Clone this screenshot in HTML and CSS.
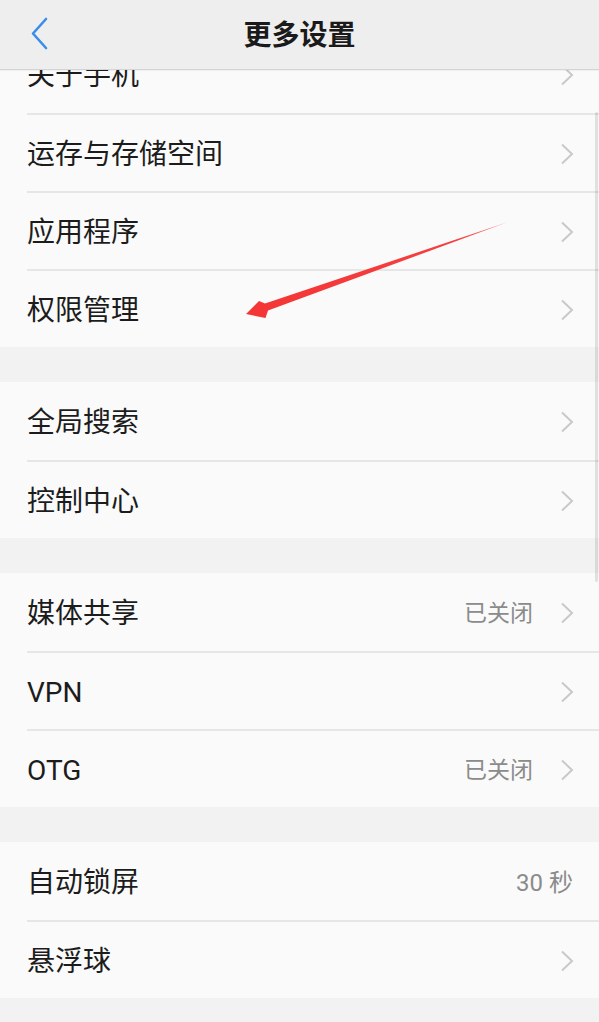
FILE: index.html
```html
<!DOCTYPE html>
<html lang="zh-CN">
<head>
<meta charset="utf-8">
<title>更多设置</title>
<link rel="stylesheet" href="styles.css">
</head>
<body>
<div class="screen">
  <header class="topbar">
    <span class="back">
      <svg width="20" height="34" viewBox="0 0 20 34"><path d="M16 2 L3 16.5 L16 31" fill="none" stroke="#3a8ee8" stroke-width="2.6" stroke-linecap="round" stroke-linejoin="round"/></svg>
    </span>
    <h1 class="title">更多设置</h1>
    <span class="spacer"></span>
  </header>

  <main class="list">
    <section class="group">
      <div class="row"><span class="label">关于手机</span><span class="chev"><svg width="14" height="22" viewBox="0 0 14 22"><path d="M2 1.5 L12 11 L2 20.5" fill="none" stroke="#c9c9c9" stroke-width="2"/></svg></span></div>
      <div class="row"><span class="label">运存与存储空间</span><span class="chev"><svg width="14" height="22" viewBox="0 0 14 22"><path d="M2 1.5 L12 11 L2 20.5" fill="none" stroke="#c9c9c9" stroke-width="2"/></svg></span></div>
      <div class="row"><span class="label">应用程序</span><span class="chev"><svg width="14" height="22" viewBox="0 0 14 22"><path d="M2 1.5 L12 11 L2 20.5" fill="none" stroke="#c9c9c9" stroke-width="2"/></svg></span></div>
      <div class="row"><span class="label">权限管理</span><span class="chev"><svg width="14" height="22" viewBox="0 0 14 22"><path d="M2 1.5 L12 11 L2 20.5" fill="none" stroke="#c9c9c9" stroke-width="2"/></svg></span></div>
    </section>

    <section class="group">
      <div class="row"><span class="label">全局搜索</span><span class="chev"><svg width="14" height="22" viewBox="0 0 14 22"><path d="M2 1.5 L12 11 L2 20.5" fill="none" stroke="#c9c9c9" stroke-width="2"/></svg></span></div>
      <div class="row"><span class="label">控制中心</span><span class="chev"><svg width="14" height="22" viewBox="0 0 14 22"><path d="M2 1.5 L12 11 L2 20.5" fill="none" stroke="#c9c9c9" stroke-width="2"/></svg></span></div>
    </section>

    <section class="group">
      <div class="row"><span class="label">媒体共享</span><span class="value">已关闭</span><span class="chev"><svg width="14" height="22" viewBox="0 0 14 22"><path d="M2 1.5 L12 11 L2 20.5" fill="none" stroke="#c9c9c9" stroke-width="2"/></svg></span></div>
      <div class="row"><span class="label">VPN</span><span class="chev"><svg width="14" height="22" viewBox="0 0 14 22"><path d="M2 1.5 L12 11 L2 20.5" fill="none" stroke="#c9c9c9" stroke-width="2"/></svg></span></div>
      <div class="row"><span class="label">OTG</span><span class="value">已关闭</span><span class="chev"><svg width="14" height="22" viewBox="0 0 14 22"><path d="M2 1.5 L12 11 L2 20.5" fill="none" stroke="#c9c9c9" stroke-width="2"/></svg></span></div>
    </section>

    <section class="group">
      <div class="row"><span class="label">自动锁屏</span><span class="value value-end">30 秒</span></div>
      <div class="row"><span class="label">悬浮球</span><span class="chev"><svg width="14" height="22" viewBox="0 0 14 22"><path d="M2 1.5 L12 11 L2 20.5" fill="none" stroke="#c9c9c9" stroke-width="2"/></svg></span></div>
    </section>
  </main>

  <div class="scrollbar"></div>

  <svg class="annotation" width="599" height="1022" viewBox="0 0 599 1022">
    <defs>
      <linearGradient id="fade" x1="246" y1="314" x2="508" y2="222" gradientUnits="userSpaceOnUse">
        <stop offset="0" stop-color="#f43535"/>
        <stop offset="0.8" stop-color="#f54040"/>
        <stop offset="1" stop-color="#f78a8a"/>
      </linearGradient>
    </defs>
    <polygon points="246,314 259,301 265,303.6 508,222 268,310.6 265.5,318" fill="url(#fade)"/>
  </svg>
</div>
</body>
</html>
```

FILE: styles.css
```css
* {
  box-sizing: border-box;
}

html, body {
  margin: 0;
  padding: 0;
}

body {
  background: #f2f2f2;
  font-family: "Roboto", "Noto Sans CJK SC", sans-serif;
  color: #1c1c1c;
}

.screen {
  position: relative;
  width: 599px;
  height: 1022px;
  overflow: hidden;
  background: #f2f2f2;
}

.topbar {
  position: absolute;
  top: 0;
  left: 0;
  right: 0;
  height: 70px;
  z-index: 2;
  background: #eeeeee;
  border-bottom: 1px solid #d4d4d4;
  box-shadow: 0 1px 1px rgba(0, 0, 0, 0.04);
  display: grid;
  grid-template-columns: 1fr auto 1fr;
  align-items: center;
}

.back {
  display: flex;
  align-items: center;
  padding-left: 30px;
  padding-bottom: 2px;
}

.title {
  margin: 0;
  font-family: "Noto Sans CJK SC", sans-serif;
  font-size: 28px;
  font-weight: 700;
  color: #1a1a1a;
  letter-spacing: 0;
  padding-bottom: 4px;
}

.list {
  padding-top: 35px;
  display: flex;
  flex-direction: column;
  gap: 35px;
}

.group {
  background: #fafafa;
  padding-left: 27px;
}

.row {
  height: 78px;
  display: flex;
  align-items: center;
  padding-right: 25px;
}

.row + .row {
  border-top: 2px solid #e6e6e6;
}

.label {
  flex: 1;
  font-size: 28px;
  line-height: 1;
  padding-top: 3px;
  color: #1c1c1c;
}

.value {
  font-size: 23px;
  line-height: 1;
  padding-top: 3px;
  color: #8b8b8b;
  margin-right: 27px;
}

.value-end {
  font-size: 24px;
  margin-right: 1px;
}

.chev {
  display: flex;
  align-items: center;
  padding-top: 1px;
}

.chev svg {
  display: block;
}

.scrollbar {
  position: absolute;
  top: 112px;
  right: 1px;
  width: 3px;
  height: 470px;
  border-radius: 2px;
  background: rgba(0, 0, 0, 0.1);
  z-index: 1;
}

.annotation {
  position: absolute;
  top: 0;
  left: 0;
  z-index: 3;
  pointer-events: none;
}
```
